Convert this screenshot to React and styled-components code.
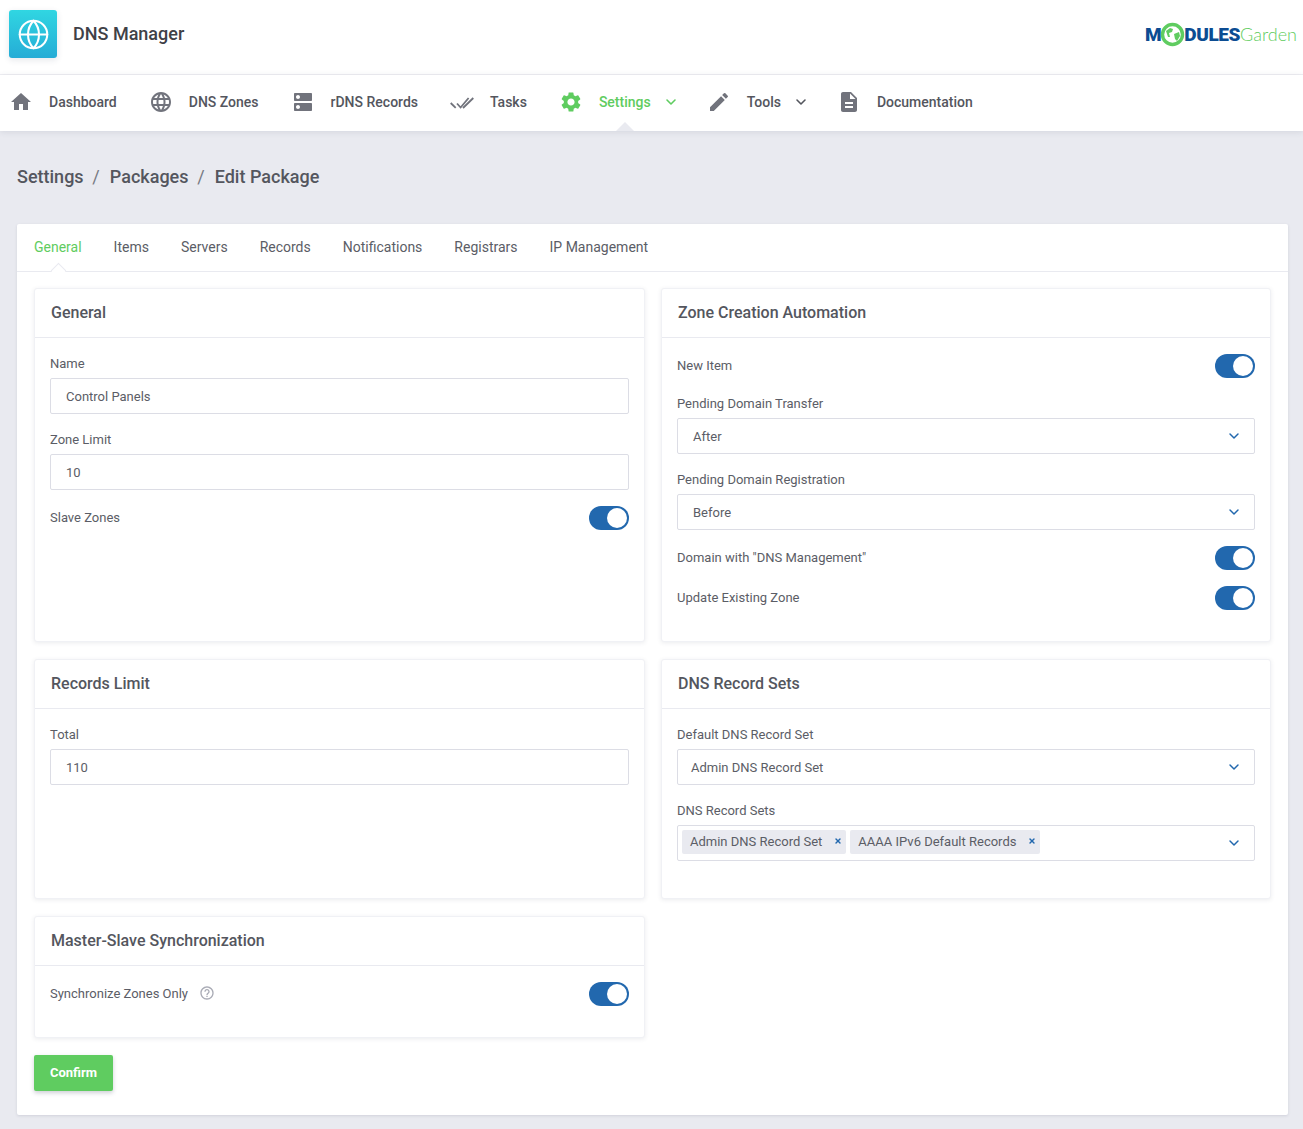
import React from "react";
import styled, { createGlobalStyle } from "styled-components";
import { Globe, ChevronDown, X } from "lucide-react";
import {
  MdHome,
  MdLanguage,
  MdDns,
  MdSettings,
  MdEdit,
  MdDescription,
  MdHelpOutline,
} from "react-icons/md";

const GlobalStyle = createGlobalStyle`
  html, body {
    margin: 0;
    padding: 0;
    background: #e9eaf0;
  }
  body {
    font-family: Roboto, "Liberation Sans", sans-serif;
    color: #54565e;
  }
  * {
    box-sizing: border-box;
  }
`;

const TopBar = styled.header`
  height: 75px;
  background: #fff;
  border-bottom: 1px solid #efeff3;
  padding: 10px 6px 0 9px;
  display: flex;
  justify-content: space-between;
`;

const Brand = styled.div`
  display: flex;
  align-items: flex-start;
  gap: 16px;
`;

const AppTile = styled.div`
  width: 48px;
  height: 48px;
  border-radius: 3px;
  background: linear-gradient(180deg, #30d6e2, #25acd6);
  box-shadow: 0 2px 6px rgba(40, 60, 90, 0.12);
  display: flex;
  align-items: center;
  justify-content: center;
  color: #fff;
`;

const AppName = styled.div`
  font-size: 18px;
  font-weight: 500;
  line-height: 48px;
  color: #3f4147;
`;

const Logo = styled.div`
  display: flex;
  align-items: center;
  height: 48px;
`;

const LogoBold = styled.span`
  font-size: 19px;
  font-weight: 900;
  letter-spacing: -0.4px;
  color: #0c4c92;
`;

const LogoThin = styled.span`
  font-family: Lato, Roboto, sans-serif;
  font-size: 18px;
  font-weight: 300;
  color: #5fcc60;
`;

const Nav = styled.nav`
  height: 56px;
  background: #fff;
  padding: 0 0 2px 9px;
  display: flex;
  align-items: center;
  gap: 32px;
  box-shadow: 0 1px 6px rgba(60, 65, 90, 0.12);
  position: relative;
`;

const NavItem = styled.a`
  position: relative;
  height: 100%;
  display: flex;
  align-items: center;
  gap: 16px;
  font-size: 14px;
  font-weight: 500;
  color: ${(p) => (p.$active ? "#5fcc60" : "#54565e")};

  & > svg {
    flex: none;
    color: ${(p) => (p.$active ? "#5fcc60" : "#71737c")};
  }

  ${(p) =>
    p.$active &&
    `&::after {
      content: "";
      position: absolute;
      left: 66px;
      bottom: -2px;
      margin-left: -9px;
      border-left: 9px solid transparent;
      border-right: 9px solid transparent;
      border-bottom: 9px solid #e9eaf0;
    }`}
`;

const NavCaret = styled(ChevronDown)`
  margin-left: -4px;
  margin-right: -4px;
  && {
    color: ${(p) => (p.$active ? "#5fcc60" : "#54565e")};
  }
`;

const Crumbs = styled.div`
  height: 93px;
  padding: 0 17px 2px;
  display: flex;
  align-items: center;
  font-size: 18px;
  font-weight: 500;
  color: #54565e;
`;

const CrumbSep = styled.span`
  margin: 0 10px 0 8.75px;
  font-weight: 400;
  color: #777982;
`;

const MainCard = styled.main`
  margin: 0 15px 14px 17px;
  background: #fff;
  border-radius: 2px;
  box-shadow: 0 1px 3px rgba(60, 65, 90, 0.14);
`;

const Tabs = styled.div`
  height: 48px;
  padding: 0 17px;
  display: flex;
  align-items: center;
  gap: 32px;
  border-bottom: 1px solid #e9eaf0;
`;

const Tab = styled.a`
  position: relative;
  height: 100%;
  padding-bottom: 2px;
  display: flex;
  align-items: center;
  font-size: 14px;
  color: ${(p) => (p.$active ? "#5fcc60" : "#5b5d66")};

  ${(p) =>
    p.$active &&
    `&::after {
      content: "";
      position: absolute;
      left: 50%;
      bottom: -5px;
      width: 10px;
      height: 10px;
      margin-left: -5px;
      background: #fff;
      border-top: 1px solid #e9eaf0;
      border-left: 1px solid #e9eaf0;
      transform: rotate(45deg);
    }`}
`;

const CardBody = styled.div`
  padding: 16px 17px 24px;
`;

const PanelGrid = styled.div`
  display: grid;
  grid-template-columns: 611px 1fr;
  column-gap: 16px;
  row-gap: 17px;
  margin-bottom: 17px;
`;

const Panel = styled.section`
  background: #fff;
  border: 1px solid #f0f1f5;
  border-radius: 3px;
  box-shadow: 0 1px 4px rgba(60, 65, 90, 0.1);
`;

const PanelHeader = styled.h3`
  margin: 0;
  height: 49px;
  padding: 0 16px 2px;
  display: flex;
  align-items: center;
  font-size: 16px;
  font-weight: 500;
  color: #54565e;
  border-bottom: 1px solid #e9eaf0;
`;

const PanelBody = styled.div`
  padding: 16px 15px 15px;
`;

const Field = styled.div`
  margin-bottom: ${(p) => p.$mb ?? 16}px;
`;

const Label = styled.label`
  display: block;
  height: 19px;
  padding-top: 1px;
  margin-bottom: 5px;
  font-size: 13px;
  line-height: 18px;
  color: #5b5d66;
`;

const Control = styled.div`
  height: 36px;
  padding: 0 15px;
  display: flex;
  align-items: center;
  justify-content: space-between;
  font-size: 13px;
  color: #5b5d66;
  background: #fff;
  border: 1px solid #dcdde5;
  border-radius: 2px;
`;

const SelectControl = styled(Control)`
  padding-left: ${(p) => p.$pad ?? 15}px;
`;

const Caret = styled(ChevronDown)`
  color: #2268ae;
  flex: none;
  margin-right: -3px;
`;

const TagBox = styled(Control)`
  padding: 0 15px 0 4px;
`;

const Tags = styled.div`
  display: flex;
  gap: 4px;
  margin-top: -2px;
`;

const Tag = styled.span`
  height: 24px;
  padding: 0 4px 2px 8px;
  display: flex;
  align-items: center;
  gap: 12px;
  font-size: 13px;
  background: #e9eaf0;
  border-radius: 2px;
  color: #5b5d66;

  svg {
    color: #2268ae;
  }
`;

const ToggleRow = styled.div`
  height: 24px;
  padding-bottom: 2px;
  margin-bottom: 16px;
  display: flex;
  align-items: center;
  justify-content: space-between;
  font-size: 13px;
  color: #5b5d66;
`;

const HelpLabel = styled.span`
  display: flex;
  align-items: center;
  gap: 11px;

  svg {
    color: #a9abb5;
  }
`;

const Toggle = styled.span`
  position: relative;
  width: 40px;
  height: 24px;
  margin-bottom: -2px;
  border-radius: 12px;
  background: #2268ae;

  &::after {
    content: "";
    position: absolute;
    top: 2px;
    right: 2px;
    width: 20px;
    height: 20px;
    border-radius: 50%;
    background: #fff;
  }
`;

const ConfirmButton = styled.button`
  display: block;
  width: 79px;
  height: 36px;
  padding: 0 0 2px;
  border: 0;
  border-radius: 2px;
  background: #5fcc60;
  color: #fff;
  font-family: inherit;
  font-size: 13px;
  font-weight: 700;
  box-shadow: 0 2px 4px rgba(60, 65, 90, 0.25);
`;

function TasksIcon() {
  return (
    <svg width="24" height="24" viewBox="0 0 24 24" fill="none" stroke="currentColor" strokeWidth="1.8">
      <path d="M0.7 13l5 4.8M7 13.5l3.6 4 8-9.5M13 18l10.3-10" />
    </svg>
  );
}

function LogoGlobe() {
  return (
    <svg width="25" height="25" viewBox="0 0 25 25" style={{ margin: "0 -1px" }}>
      <circle cx="12.5" cy="12.5" r="10" fill="#fff" stroke="#5fcc60" strokeWidth="3.4" />
      <path d="M6 9l4-3 3 1-1 3-3 1 1 4-2 0zM14 12l5-2 1 4-3 5-2-2z" fill="#5fcc60" />
    </svg>
  );
}

export default function App() {
  return (
    <>
      <GlobalStyle />
      <TopBar>
        <Brand>
          <AppTile>
            <Globe size={33} strokeWidth={1.5} />
          </AppTile>
          <AppName>DNS Manager</AppName>
        </Brand>
        <Logo>
          <LogoBold>M</LogoBold>
          <LogoGlobe />
          <LogoBold>DULES</LogoBold>
          <LogoThin>Garden</LogoThin>
        </Logo>
      </TopBar>

      <Nav>
        <NavItem>
          <MdHome size={24} />
          Dashboard
        </NavItem>
        <NavItem>
          <MdLanguage size={24} />
          DNS Zones
        </NavItem>
        <NavItem>
          <MdDns size={24} />
          rDNS Records
        </NavItem>
        <NavItem>
          <TasksIcon />
          Tasks
        </NavItem>
        <NavItem $active>
          <MdSettings size={24} />
          Settings
          <NavCaret size={16} strokeWidth={2.4} $active />
        </NavItem>
        <NavItem>
          <MdEdit size={24} />
          Tools
          <NavCaret size={16} strokeWidth={2.4} />
        </NavItem>
        <NavItem>
          <MdDescription size={24} />
          Documentation
        </NavItem>
      </Nav>

      <Crumbs>
        Settings
        <CrumbSep>/</CrumbSep>
        Packages
        <CrumbSep>/</CrumbSep>
        Edit Package
      </Crumbs>

      <MainCard>
        <Tabs>
          <Tab $active>General</Tab>
          <Tab>Items</Tab>
          <Tab>Servers</Tab>
          <Tab>Records</Tab>
          <Tab>Notifications</Tab>
          <Tab>Registrars</Tab>
          <Tab>IP Management</Tab>
        </Tabs>

        <CardBody>
          <PanelGrid>
            <Panel>
              <PanelHeader>General</PanelHeader>
              <PanelBody>
                <Field>
                  <Label>Name</Label>
                  <Control>Control Panels</Control>
                </Field>
                <Field>
                  <Label>Zone Limit</Label>
                  <Control>10</Control>
                </Field>
                <ToggleRow>
                  Slave Zones
                  <Toggle />
                </ToggleRow>
              </PanelBody>
            </Panel>

            <Panel>
              <PanelHeader>Zone Creation Automation</PanelHeader>
              <PanelBody>
                <ToggleRow>
                  New Item
                  <Toggle />
                </ToggleRow>
                <Field>
                  <Label>Pending Domain Transfer</Label>
                  <SelectControl>
                    After
                    <Caret size={16} strokeWidth={2.2} />
                  </SelectControl>
                </Field>
                <Field>
                  <Label>Pending Domain Registration</Label>
                  <SelectControl>
                    Before
                    <Caret size={16} strokeWidth={2.2} />
                  </SelectControl>
                </Field>
                <ToggleRow>
                  Domain with "DNS Management"
                  <Toggle />
                </ToggleRow>
                <ToggleRow>
                  Update Existing Zone
                  <Toggle />
                </ToggleRow>
              </PanelBody>
            </Panel>

            <Panel>
              <PanelHeader>Records Limit</PanelHeader>
              <PanelBody>
                <Field>
                  <Label>Total</Label>
                  <Control>110</Control>
                </Field>
              </PanelBody>
            </Panel>

            <Panel>
              <PanelHeader>DNS Record Sets</PanelHeader>
              <PanelBody>
                <Field>
                  <Label>Default DNS Record Set</Label>
                  <SelectControl $pad={13}>
                    Admin DNS Record Set
                    <Caret size={16} strokeWidth={2.2} />
                  </SelectControl>
                </Field>
                <Field $mb={22}>
                  <Label>DNS Record Sets</Label>
                  <TagBox>
                    <Tags>
                      <Tag>
                        Admin DNS Record Set
                        <X size={8} strokeWidth={4} />
                      </Tag>
                      <Tag>
                        AAAA IPv6 Default Records
                        <X size={8} strokeWidth={4} />
                      </Tag>
                    </Tags>
                    <Caret size={16} strokeWidth={2.2} />
                  </TagBox>
                </Field>
              </PanelBody>
            </Panel>

            <Panel>
              <PanelHeader>Master-Slave Synchronization</PanelHeader>
              <PanelBody>
                <ToggleRow>
                  <HelpLabel>
                    Synchronize Zones Only
                    <MdHelpOutline size={16} />
                  </HelpLabel>
                  <Toggle />
                </ToggleRow>
              </PanelBody>
            </Panel>
          </PanelGrid>

          <ConfirmButton>Confirm</ConfirmButton>
        </CardBody>
      </MainCard>
    </>
  );
}
